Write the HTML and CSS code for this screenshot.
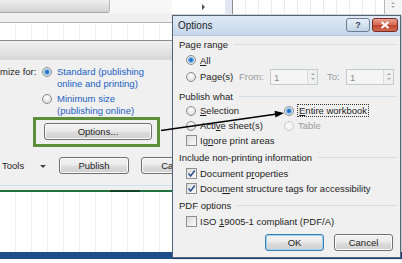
FILE: index.html
```html
<!DOCTYPE html>
<html lang="en">
<head>
    <meta charset="UTF-8">
    <title>Publish as PDF - Options</title>
    <link rel="stylesheet" href="styles.css">
</head>
<body>
    <div class="workspace">
        <!-- Save As pane behind the dialog -->
        <div class="left">
            <div class="ribbon"><div class="ribbon-tab"></div></div>
            <div class="strip"></div>
            <div class="grid grid-top"></div>
            <div class="pane-head"></div>
            <div class="pane">
                <div class="opt-row">
                    <span class="opt-label">mize for:</span>
                    <div class="opt-choices">
                        <div class="choice"><span class="radio on"></span><span class="link">Standard (publishing<br>online and printing)</span></div>
                        <div class="choice"><span class="radio"></span><span class="link">Minimum size<br>(publishing online)</span></div>
                    </div>
                </div>
                <div class="highlight"><button class="btn btn-options">Options...</button></div>
                <div class="action-row">
                    <span class="tools">Tools</span><span class="caret"></span>
                    <button class="btn btn-publish">Publish</button>
                    <button class="btn btn-cancel">Cancel</button>
                </div>
            </div>
            <div class="pane-foot"></div>
            <div class="grid grid-bottom"></div>
        </div>

        <!-- Sheet visible above the dialog -->
        <div class="right">
            <div class="sheet-top">
                <div class="ts-a"><span class="tri"></span></div>
                <div class="ts-blue"></div>
                <div class="ts-grid"></div>
                <div class="ts-spin"><span class="up"></span><span class="down"></span></div>
            </div>
        </div>
    </div>
    <div class="statusbar"></div>

    <!-- Options dialog -->
    <div class="dialog">
        <div class="titlebar">
            <span class="title">Options</span>
            <span class="tb-btn tb-help">?</span>
            <span class="tb-btn tb-close">
                <svg width="10" height="8" viewBox="0 0 10 8"><path d="M1.5 1 L8.5 7 M8.5 1 L1.5 7" stroke="#fff" stroke-width="2"/></svg>
            </span>
        </div>
        <div class="dlg-body">
            <div class="group">Page range</div>
            <div class="row row-all"><span class="radio on"></span><span class="lbl"><u>A</u>ll</span></div>
            <div class="row row-pages">
                <span class="radio"></span><span class="lbl pages-lbl">Pa<u>g</u>e(s)</span>
                <span class="dis from-lbl">From:</span>
                <span class="spin"><span class="spin-val">1</span><span class="spin-btns"><span class="up"></span><span class="down"></span></span></span>
                <span class="dis to-lbl">To:</span>
                <span class="spin"><span class="spin-val">1</span><span class="spin-btns"><span class="up"></span><span class="down"></span></span></span>
            </div>

            <div class="group g-gap">Publish what</div>
            <div class="row">
                <div class="col1"><span class="radio"></span><span class="lbl"><u>S</u>election</span></div>
                <span class="radio on"></span><span class="lbl focus"><u>E</u>ntire workbook</span>
            </div>
            <div class="row">
                <div class="col1"><span class="radio"></span><span class="lbl">Acti<u>v</u>e sheet(s)</span></div>
                <span class="radio dis-radio"></span><span class="lbl dis">Table</span>
            </div>
            <div class="row">
                <span class="check"></span><span class="lbl">Ig<u>n</u>ore print areas</span>
            </div>

            <div class="group g-gap2">Include non-printing information</div>
            <div class="row row-first">
                <span class="check"><svg width="9" height="9" viewBox="0 0 9 9"><path d="M1.5 4.5 L3.6 7 L7.8 1.5" fill="none" stroke="#2c4f8f" stroke-width="1.5"/></svg></span>
                <span class="lbl">Document p<u>r</u>operties</span>
            </div>
            <div class="row">
                <span class="check"><svg width="9" height="9" viewBox="0 0 9 9"><path d="M1.5 4.5 L3.6 7 L7.8 1.5" fill="none" stroke="#2c4f8f" stroke-width="1.5"/></svg></span>
                <span class="lbl">Docu<u>m</u>ent structure tags for accessibility</span>
            </div>

            <div class="group g-gap2">PDF options</div>
            <div class="row row-first">
                <span class="check"></span><span class="lbl">ISO <u>1</u>9005-1 compliant (PDF/A)</span>
            </div>

            <div class="buttons">
                <button class="btn btn-ok">OK</button>
                <button class="btn btn-dlg-cancel">Cancel</button>
            </div>
        </div>
    </div>

    <!-- Callout arrow from the Options button to the dialog -->
    <svg class="pointer" width="402" height="263" viewBox="0 0 402 263">
        <line x1="161" y1="130.5" x2="277" y2="114" stroke="#000" stroke-width="1.6"/>
        <polygon points="284,113 275.5,117.4 274.6,110.8" fill="#000"/>
    </svg>
</body>
</html>
```

FILE: styles.css
```css
/* General */
* {
    box-sizing: border-box;
}

body {
    margin: 0;
    width: 402px;
    height: 263px;
    overflow: hidden;
    position: relative;
    background: #ffffff;
    color: #1e1e1e;
    font-family: "Liberation Sans", Arial, sans-serif;
    font-size: 9.5px;
}

u {
    text-decoration: underline;
    text-underline-offset: 1px;
}

/* Buttons (Windows 7 look) */
.btn {
    font: inherit;
    color: #1e1e1e;
    padding: 0;
    border: 1px solid #707070;
    border-radius: 3px;
    background: linear-gradient(#f2f2f2 0%, #ebebeb 48%, #dddddd 52%, #cfcfcf 100%);
    box-shadow: inset 0 0 0 1px #fbfbfb;
}

/* Background window */
.workspace {
    display: flex;
    height: 252px;
}

.left {
    width: 172px;
    flex: none;
    display: flex;
    flex-direction: column;
    overflow: hidden;
}

.ribbon {
    height: 13px;
    background: #f7f7f7;
}

.ribbon-tab {
    width: 110px;
    height: 13px;
    background: linear-gradient(#eeeeee, #d2d2d2);
    border-right: 1px solid #b9b9b9;
    border-bottom: 1px solid #a8a8a8;
    border-bottom-right-radius: 3px;
}

.strip {
    height: 10px;
    background: #f0f0f0;
    border-bottom: 1px solid #b3b3b3;
}

.grid {
    background: #ffffff repeating-linear-gradient(90deg, transparent 0 15px, #eef0f2 15px 16px);
}

.grid-top {
    height: 17px;
}

.grid-bottom {
    flex: 1;
}

.pane-head {
    height: 20px;
    border-top: 1px solid #8d8d8d;
    background: linear-gradient(#f1f1f1, #d8d8d8);
}

.pane {
    height: 125px;
    padding-top: 6px;
    background: #f0f0f0;
}

.opt-row {
    display: flex;
    line-height: 12px;
}

.opt-label {
    width: 42px;
    flex: none;
}

.opt-choices {
    display: flex;
    flex-direction: column;
    gap: 3px;
}

.choice {
    display: flex;
    align-items: flex-start;
    gap: 5px;
}

.choice .radio {
    margin-top: 1px;
}

.link {
    color: #2160c4;
    white-space: nowrap;
}

.highlight {
    margin-left: 33px;
    width: 127px;
    height: 30px;
    border: 3px solid #5d8f3b;
    padding: 3px 5px 4px 8px;
}

.btn-options {
    width: 100%;
    height: 100%;
}

.action-row {
    display: flex;
    align-items: center;
    height: 17px;
    margin-top: 10px;
    padding-left: 2px;
}

.action-row > * {
    flex: none;
}

.tools {
    width: 36px;
}

.caret {
    margin: 1px 13px 0 2px;
    border-top: 3px solid #444444;
    border-left: 3px solid transparent;
    border-right: 3px solid transparent;
}

.btn-publish,
.btn-cancel {
    width: 70px;
    height: 17px;
}

.btn-cancel {
    margin-left: 12px;
}

.pane-foot {
    height: 7px;
    background: #f0f0f0;
    border-top: 1px solid #cfe0f1;
    border-bottom: 2px solid #24703f;
    display: flex;
    align-items: flex-end;
}

.pane-foot::after {
    content: "";
    width: 30px;
    height: 2px;
    margin: 0 0 -2px 110px;
    background: #15432a;
}

.right {
    flex: 1;
    background: #f0f0f0;
}

.sheet-top {
    height: 15px;
    display: flex;
    background: #ffffff;
    border-bottom: 1px solid #d7d7d7;
}

.ts-a {
    width: 53px;
    padding: 4px 0 0 30px;
}

.tri {
    display: block;
    width: 0;
    border-left: 3px solid #555555;
    border-top: 3px solid transparent;
    border-bottom: 3px solid transparent;
}

.ts-blue {
    width: 8px;
    background: #dfe8f3;
    border-right: 1px solid #8f8f8f;
}

.ts-grid {
    flex: 1;
    background: #ffffff repeating-linear-gradient(90deg, transparent 0 12px, #e9ecef 12px 13px);
    border-right: 1px solid #b9b9b9;
}

.ts-spin {
    width: 17px;
    padding: 2px 4px 0 3px;
    display: flex;
    flex-direction: column;
    gap: 2px;
    align-items: center;
    background: #f4f4f4;
}

.statusbar {
    height: 7px;
    background: #1f4d8b;
}

/* Tiny spin arrows */
.up,
.down {
    display: block;
    width: 0;
    border-left: 2px solid transparent;
    border-right: 2px solid transparent;
}

.up {
    border-bottom: 2px solid #a9a9a9;
}

.down {
    border-top: 2px solid #a9a9a9;
}

/* Dialog */
.dialog {
    position: absolute;
    left: 172px;
    top: 15px;
    width: 229px;
    height: 243px;
    display: flex;
    flex-direction: column;
    border: 1px solid #55647a;
    background: #f0f0f0;
    box-shadow: 1px 1px 2px rgba(0, 0, 0, 0.25);
}

.titlebar {
    height: 20px;
    display: flex;
    padding: 0 2px 0 5px;
    background: linear-gradient(#dfe9f5, #c6d7eb);
    border-bottom: 1px solid #b6c6da;
}

.title {
    flex: 1;
    align-self: center;
    font-size: 10px;
}

.tb-btn {
    width: 24px;
    height: 14px;
    margin: 2px 0 0 2px;
    border: 1px solid #6d7d92;
    border-radius: 3px;
    display: flex;
    align-items: center;
    justify-content: center;
}

.tb-help {
    background: linear-gradient(#e8eff7, #c3d3e6);
    color: #32465f;
    font-weight: bold;
    font-size: 9px;
}

.tb-close {
    width: 26px;
    border-color: #7a2d22;
    background: linear-gradient(#eaa191, #d46a55 48%, #c04431 52%, #cf6a4f);
}

.dlg-body {
    flex: 1;
    display: flex;
    flex-direction: column;
    padding: 1px 3px 0 6px;
}

.group {
    height: 14px;
    display: flex;
    align-items: center;
}

.group::after {
    content: "";
    flex: 1;
    height: 1px;
    margin-left: 6px;
    background: #d3dde6;
}

.g-gap {
    margin-top: 4px;
}

.g-gap2 {
    margin-top: 2px;
}

.row {
    height: 15px;
    display: flex;
    align-items: center;
    padding-left: 7px;
    white-space: nowrap;
}

.row-all {
    height: 14px;
    margin-top: 2px;
}

.row-pages {
    height: 17px;
    margin-top: 1px;
}

.row-pages > * {
    flex: none;
}

.row-first {
    margin-top: 2px;
}

.col1 {
    width: 98px;
    display: flex;
    align-items: center;
}

.lbl {
    margin-left: 4px;
}

.focus {
    border: 1px dotted #333333;
    padding: 0 1px;
    margin-left: 3px;
}

.dis {
    color: #9a9a9a;
}

.pages-lbl {
    width: 39px;
}

.from-lbl {
    width: 31px;
}

.to-lbl {
    margin-left: 9px;
    width: 19px;
}

.spin {
    width: 48px;
    height: 16px;
    display: flex;
    border: 1px solid #c5cad0;
    background: #f5f5f5;
}

.spin-val {
    flex: 1;
    padding: 2px 0 0 3px;
    color: #8c8c8c;
}

.spin-btns {
    width: 10px;
    display: flex;
    flex-direction: column;
    align-items: center;
    justify-content: space-evenly;
    border-left: 1px solid #dadada;
    background: #f0f0f0;
}

/* Radio buttons and check boxes */
.radio {
    width: 10px;
    height: 10px;
    flex: none;
    border: 1px solid #8a8c8e;
    border-radius: 50%;
    background: radial-gradient(circle at 50% 35%, #ffffff, #d4d4d4);
}

.radio.on {
    background: radial-gradient(circle, #1b5aa6 0, #3c87d6 1.6px, #92c6ef 2.8px, #e3e3e3 3.4px, #fafafa 5px);
}

.radio.dis-radio {
    border-color: #c9c9c9;
    background: #f5f5f5;
}

.check {
    width: 11px;
    height: 11px;
    flex: none;
    display: flex;
    align-items: center;
    justify-content: center;
    border: 1px solid #8e8f8f;
    background: linear-gradient(135deg, #dcdcdc, #fafafa);
}

.check + .lbl {
    margin-left: 3px;
}

.buttons {
    display: flex;
    justify-content: flex-end;
    gap: 10px;
    margin-top: 5px;
    padding-right: 4px;
}

.btn-ok,
.btn-dlg-cancel {
    width: 59px;
    height: 17px;
}

.btn-ok {
    border-color: #3c7fb1;
    box-shadow: inset 0 0 0 1px #9ed3f5;
}

/* Arrow overlay */
.pointer {
    position: absolute;
    left: 0;
    top: 0;
    pointer-events: none;
}
```
